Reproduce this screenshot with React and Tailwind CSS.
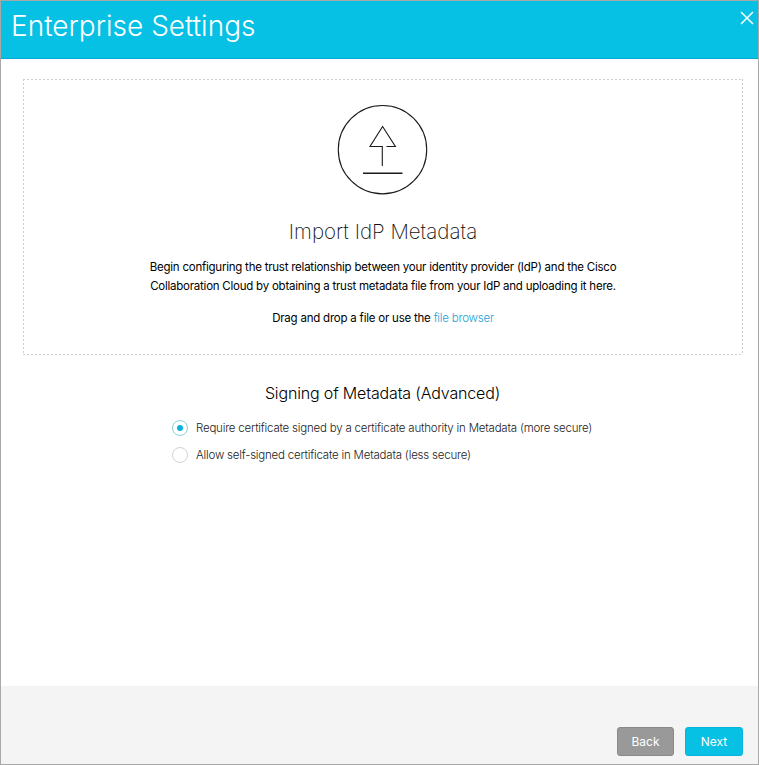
function UploadIcon() {
  return (
    <svg width="92" height="92" viewBox="0 0 92 92" fill="none" stroke="#1a1a1a" strokeWidth="1.1">
      <circle cx="45.5" cy="45.7" r="44.2" />
      <path d="M45.3 62V42.5H33L45.6 22.5L58.4 42.5H49.5" />
      <path d="M26 69.2H65.5" strokeWidth="1.4" />
    </svg>
  );
}

function RadioOption({ checked, label }) {
  return (
    <label className="flex h-[27px] items-center">
      <span
        className={
          checked
            ? "flex size-4 shrink-0 items-center justify-center rounded-full border border-[#8fcfd8]"
            : "flex size-4 shrink-0 items-center justify-center rounded-full border border-[#d3d3d3]"
        }
      >
        {checked && <span className="size-1.5 rounded-full bg-[#07b3de]" />}
      </span>
      <span className="ml-[8.5px] whitespace-nowrap pt-px text-[11.5px] font-light leading-[18px] tracking-[-0.21px] text-[#222]">{label}</span>
    </label>
  );
}

export default function App() {
  return (
    <div className="flex h-[765px] w-[759px] flex-col border border-[#a8a8a8] bg-white font-['Inter',sans-serif] text-black">
      <header className="flex h-[58px] shrink-0 items-start justify-between border-b border-[#06a9d6] bg-[#07c1e4] pl-2.5 pr-1">
        <h1 className="mt-[7px] whitespace-nowrap text-[28px] font-light leading-9 text-white">Enterprise Settings</h1>
        <button aria-label="Close" className="mt-2.5">
          <svg width="14" height="14" viewBox="0 0 14 14" fill="none" stroke="white" strokeWidth="1.5">
            <path d="M1 1L13 13M13 1L1 13" />
          </svg>
        </button>
      </header>

      <main className="flex grow flex-col items-center">
        <section className="mt-5 ml-[7px] flex h-[276px] w-[720px] flex-col items-center bg-[image:repeating-linear-gradient(90deg,#cfcfcf_0_2px,transparent_2px_4px),repeating-linear-gradient(90deg,#cfcfcf_0_2px,transparent_2px_4px),repeating-linear-gradient(180deg,#cfcfcf_0_2px,transparent_2px_4px),repeating-linear-gradient(180deg,#cfcfcf_0_2px,transparent_2px_4px)] bg-[position:left_top,left_bottom,left_top,right_top] bg-[size:100%_1px,100%_1px,1px_100%,1px_100%] bg-no-repeat pt-[25px]">
          <UploadIcon />
          <h2 className="mt-[22px] whitespace-nowrap text-[20.5px] font-extralight leading-7 text-[#111]">Import IdP Metadata</h2>
          <p className="mt-3 whitespace-nowrap text-center text-[11.5px] leading-[19px] tracking-[-0.235px]">
            Begin configuring the trust relationship between your identity provider (IdP) and the Cisco
            <br />
            Collaboration Cloud by obtaining a trust metadata file from your IdP and uploading it here.
          </p>
          <p className="mt-[13px] whitespace-nowrap text-[11.5px] leading-[19px] tracking-[-0.22px]">
            Drag and drop a file or use the <a className="font-light text-[#1a9fd6]">file browser</a>
          </p>
        </section>

        <section className="ml-[6px] mt-[26px] flex flex-col items-center">
          <h3 className="whitespace-nowrap text-base font-light leading-6 tracking-[-0.16px]">Signing of Metadata (Advanced)</h3>
          <div className="mt-[9px] w-[422px]">
            <RadioOption checked label="Require certificate signed by a certificate authority in Metadata (more secure)" />
            <RadioOption label="Allow self-signed certificate in Metadata (less secure)" />
          </div>
        </section>
      </main>

      <footer className="flex h-[78px] shrink-0 items-end justify-end gap-[11px] bg-[#f4f4f4] pb-2 pr-[15px]">
        <button className="h-[29px] w-[57px] rounded-[3px] border border-[#8a8a8a] bg-[#999] text-xs text-white">Back</button>
        <button className="h-[29px] w-[58px] rounded-[3px] border border-[#07b5dc] bg-[#07c1e4] text-xs text-white">Next</button>
      </footer>
    </div>
  );
}
